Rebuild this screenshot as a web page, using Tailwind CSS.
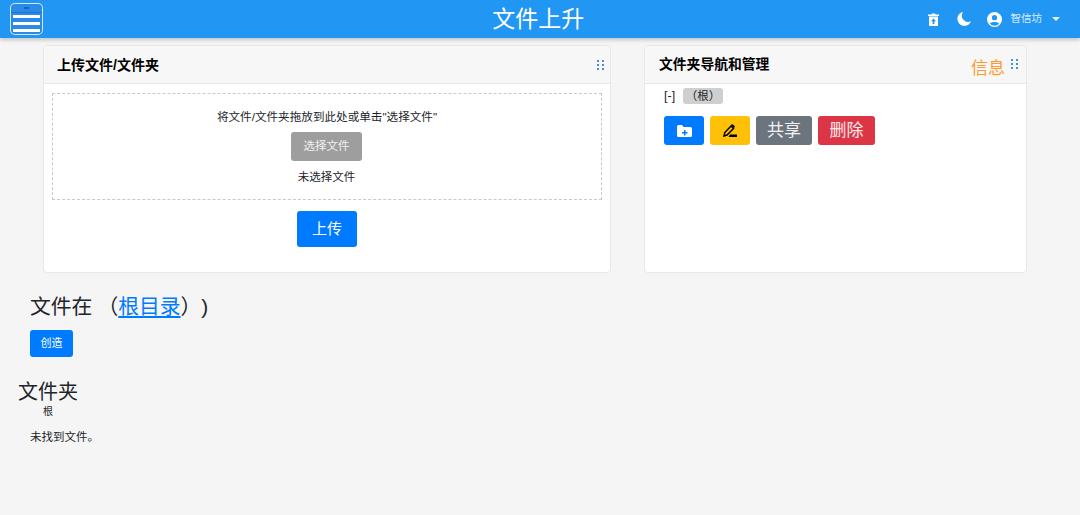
<!DOCTYPE html>
<html>
<head>
<meta charset="utf-8">
<script src="https://cdn.jsdelivr.net/npm/@tailwindcss/browser@4"></script>
</head>
<body class="bg-[#f5f5f5] h-[515px] overflow-hidden font-['Liberation_Sans','Noto_Sans_CJK_SC',sans-serif] text-[#212529]">
    <!--header-->
    <header class="relative h-[38px] bg-[#2196f3] shadow-[0_2px_4px_rgba(0,0,0,0.2)] flex items-center pl-[10px] pr-[20px] text-white">
        <!--logo-->
        <div class="w-[33px] h-[32px] rounded-[5px] border border-white/80 bg-[#2a8ae6] flex flex-col items-center flex-none">
            <div class="w-[5px] h-[2px] bg-[#1565c0] mt-[3px]"></div>
            <div class="w-full h-[1px] bg-[#1976d2] mt-[3px]"></div>
            <div class="w-[27px] h-[3px] bg-white mt-[2px]"></div>
            <div class="w-[27px] h-[3px] bg-white mt-[4px]"></div>
            <div class="w-[27px] h-[3px] bg-white mt-[4px]"></div>
        </div>
        <div class="flex-1 text-center text-[23px] leading-[38px] pl-[106px]">文件上升</div>
        <div class="flex items-center">
            <svg class="w-[11px] h-[13px]" viewBox="0 0 11 13" fill="#fff"><path d="M0 1.500h3.500L4 .5h3l.5 1H11V3H0zM1 3.500h9V12a1 1 0 0 1-1 1H2a1 1 0 0 1-1-1z"/><path d="M5.500 5.500 3 8.200h1.600V11h1.800V8.200H8z" fill="#2196f3"/></svg>
            <svg class="w-[14px] h-[14px] ml-[18px]" viewBox="0 0 14 14" fill="#fff"><path d="M6 0a7 7 0 1 0 8 9.200A6.300 6.300 0 0 1 6 0z"/></svg>
            <svg class="w-[15px] h-[15px] ml-[16px]" viewBox="0 0 16 16"><circle cx="8" cy="8" r="8" fill="#fff"/><circle cx="8" cy="6" r="2.800" fill="#2196f3"/><path d="M3 12.500C4 10 12 10 13 12.500A7 7 0 0 1 3 12.500z" fill="#2196f3"/></svg>
            <span class="ml-[9px] text-[10.5px] text-white/80">智信坊</span>
            <span class="ml-[10px] w-0 h-0 border-x-[4px] border-x-transparent border-t-[4px] border-t-white/90"></span>
        </div>
    </header>

    <main>
        <!--cards-->
        <div class="flex gap-[33px] pl-[43px] pt-[7px]">
            <section class="w-[568px] h-[228px] bg-white border border-[#e8e8e8] rounded-[4px] flex-none">
                <div class="h-[38px] bg-[#f7f7f7] border-b border-[#e8e8e8] flex items-center pl-[13px] pr-[6px] rounded-t-[4px]">
                    <h2 class="flex-1 font-bold text-sm text-black">上传文件/文件夹</h2>
                    <svg class="w-[7px] h-[10px]" viewBox="0 0 7 10" fill="#4a8fd6"><rect width="2" height="2"/><rect x="5" width="2" height="2"/><rect y="4" width="2" height="2"/><rect x="5" y="4" width="2" height="2"/><rect y="8" width="2" height="2"/><rect x="5" y="8" width="2" height="2"/></svg>
                </div>
                <div class="mx-[8px] mt-[9px] h-[107px] border border-dashed border-[#c9c9c9] flex flex-col items-center pt-[16px]">
                    <p class="text-[11.6px] leading-[14px]">将文件/文件夹拖放到此处或单击"选择文件"</p>
                    <button class="mt-[8px] -ml-[2px] pl-[1px] w-[71px] h-[29px] bg-[#9e9e9e] text-white/85 rounded-[3px] text-[11.5px]">选择文件</button>
                    <p class="mt-[9px] -ml-[1px] text-[11.5px] leading-[14px]">未选择文件</p>
                </div>
                <div class="flex justify-center mt-[11px]">
                    <button class="w-[60px] h-[36px] bg-[#007bff] text-white rounded-[3px] text-[15px]">上传</button>
                </div>
            </section>
            <section class="w-[383px] h-[228px] bg-white border border-[#e8e8e8] rounded-[4px] flex-none">
                <div class="h-[38px] bg-[#f7f7f7] border-b border-[#e8e8e8] flex items-center pl-[14px] pr-[8px] rounded-t-[4px]">
                    <h2 class="flex-1 font-bold text-[13.8px] text-black pt-[1px]">文件夹导航和管理</h2>
                    <span class="text-[#ff9a2e] text-[17px] mt-[9px] mr-[6px]">信息</span>
                    <svg class="w-[7px] h-[10px] mb-[2px]" viewBox="0 0 7 10" fill="#4a8fd6"><rect width="2" height="2"/><rect x="5" width="2" height="2"/><rect y="4" width="2" height="2"/><rect x="5" y="4" width="2" height="2"/><rect y="8" width="2" height="2"/><rect x="5" y="8" width="2" height="2"/></svg>
                </div>
                <div class="pl-[19px] pt-[4px]">
                    <div class="flex items-center text-[11.5px] h-[16px]">
                        <span class="text-[12.5px] whitespace-pre">[-]</span>
                        <span class="ml-[8px] w-[40px] h-[16px] bg-[#cfcfcf] rounded-[3px] text-center leading-[16px]">（根）</span>
                    </div>
                    <div class="flex gap-[6px] mt-[12px]">
                        <button class="w-[40px] h-[29px] bg-[#007bff] rounded-[3px] flex items-center justify-center">
                            <svg class="w-[15px] h-[12px]" viewBox="0 0 15 12" fill="#fff"><path d="M0 1.500A1.500 1.500 0 0 1 1.500 0H5l1.500 2h7A1.500 1.500 0 0 1 15 3.500v7a1.500 1.500 0 0 1-1.500 1.500h-12A1.500 1.500 0 0 1 0 10.500z"/><path d="M7 5h1.500v2H10.500v1.500H8.500v2H7v-2H5V7h2z" fill="#007bff"/></svg>
                        </button>
                        <button class="w-[40px] h-[29px] bg-[#ffc107] rounded-[3px] flex items-center justify-center">
                            <svg class="w-[14px] h-[13px]" viewBox="0 0 14 13"><path d="M8 2 10.500 4.500 4 11 1 12 1.800 8.500z" fill="none" stroke="#000" stroke-width="1.500"/><path d="M8.500 0.500a1 1 0 0 1 1.400 0l1.600 1.600a1 1 0 0 1 0 1.400l-.6.600-3-3zM7 10.500h7V13H5.500z" fill="#000"/></svg>
                        </button>
                        <button class="w-[56px] h-[29px] bg-[#6c757d] text-white/90 rounded-[3px] text-[17px]">共享</button>
                        <button class="w-[57px] h-[29px] bg-[#dc3545] text-white/90 rounded-[3px] text-[17px]">删除</button>
                    </div>
                </div>
            </section>
        </div>

        <!--files-->
        <div class="pl-[30px] pt-[20px]">
            <h3 class="text-[20.8px] leading-[28px] whitespace-pre [text-spacing-trim:space-all]">文件在<span class="ml-[5px]">（</span><a class="text-[#007bff] underline">根目录</a>）)</h3>
            <button class="mt-[9px] block w-[43px] h-[27px] bg-[#007bff] text-white rounded-[3px] text-[11px]">创造</button>
            <h3 class="-ml-[12px] mt-[21px] text-[20px] leading-[28px]">文件夹</h3>
            <p class="ml-[13px] text-[10px] leading-[12px]">根</p>
            <p class="mt-[12px] text-[11.5px] leading-[14px]">未找到文件。</p>
        </div>
    </main>
</body>
</html>
